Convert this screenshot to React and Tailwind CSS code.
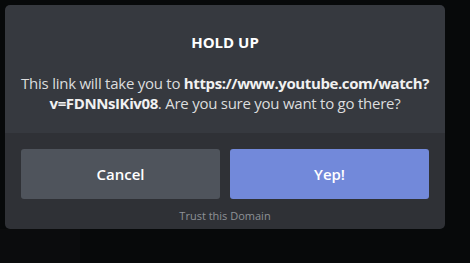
export default function App() {
  return (
    <div className="w-[470px] h-[263px] bg-[#07090a] flex flex-col font-['Open_Sans','Noto_Sans',sans-serif]">
      <div className="pt-[5px] pl-[5px]">
        <div className="w-[440px] h-[224px] rounded-[5px] overflow-hidden flex flex-col">
          {/* header + message */}
          <div className="bg-[#36393f] h-[128px] px-3 pt-[27px] text-center">
            <h1 className="text-white text-[15px] leading-5 font-bold">HOLD UP</h1>
            <p className="mt-[21px] text-[#dcddde] text-[15px] leading-5 tracking-[-0.25px]">
              This link will take you to{" "}
              <strong className="font-bold text-[#f1f1f1] tracking-[-0.4px]">
                https://www.youtube.com/watch?<wbr />v=FDNNsIKiv08
              </strong>
              . Are you sure you want to go there?
            </p>
          </div>

          {/* footer */}
          <div className="bg-[#2f3136] flex-1 px-4 pt-4 flex flex-col">
            <div className="flex gap-[10px]">
              <button className="flex-1 h-[50px] rounded-[3px] bg-[#4f545c] text-white text-[15px] font-semibold">
                Cancel
              </button>
              <button className="flex-1 h-[50px] rounded-[3px] bg-[#7289da] text-white text-[15px] font-semibold">
                Yep!
              </button>
            </div>
            <div className="mt-[9px] text-center text-[11px] leading-4 text-[#8e9297]">
              Trust this Domain
            </div>
          </div>
        </div>
      </div>
      <div className="flex-1 flex">
        <div className="w-[80px] bg-[#0b0c0d]"></div>
        <div className="flex-1"></div>
      </div>
    </div>
  );
}
